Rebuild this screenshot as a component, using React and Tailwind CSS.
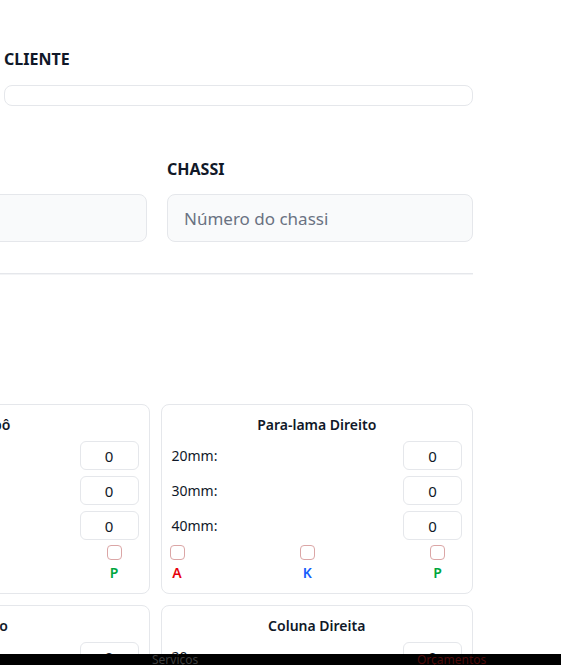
import React, { useState } from 'react';

const PARTS = [
  'Capô',
  'Para-lama Direito',
  'Teto',
  'Coluna Direita',
  'Porta Esquerda',
  'Porta Direita',
];

const SIZES = ['20mm', '30mm', '40mm'];

const TYPES = [
  { key: 'A', color: 'text-red-600' },
  { key: 'K', color: 'text-blue-600' },
  { key: 'P', color: 'text-green-600' },
];

const PartCard = ({ name }) => {
  const [values, setValues] = useState({ '20mm': 0, '30mm': 0, '40mm': 0 });
  const [checks, setChecks] = useState({ A: false, K: false, P: false });

  return (
    <div className="rounded-lg border border-gray-200 bg-white px-[10px] pt-[10px] pb-[10px]">
      <h4 className="text-center text-[14px] font-semibold leading-5 text-gray-900">{name}</h4>

      <div className="mt-[6px] flex flex-col gap-[6px]">
        {SIZES.map((size) => (
          <div key={size} className="flex items-center justify-between">
            <span className="text-[14px] text-gray-900">{size}:</span>
            <input
              type="text"
              value={values[size]}
              onChange={(e) => setValues({ ...values, [size]: e.target.value })}
              className="h-[29px] w-[59px] rounded-md border border-gray-200 bg-white text-center text-[15px] text-gray-900 outline-none"
            />
          </div>
        ))}
      </div>

      <div className="mt-[5px] -ml-[2px] flex justify-between pr-[17px]">
        {TYPES.map((t) => (
          <label key={t.key} className="flex cursor-pointer flex-col items-center">
            <input
              type="checkbox"
              checked={checks[t.key]}
              onChange={() => setChecks({ ...checks, [t.key]: !checks[t.key] })}
              className="h-[15px] w-[15px] appearance-none rounded-[4px] border border-[#dba6a6] bg-white"
            />
            <span className={`mt-[3px] text-[14px] font-semibold leading-5 ${t.color}`}>{t.key}</span>
          </label>
        ))}
      </div>
    </div>
  );
};

const App = () => {
  const [cliente, setCliente] = useState('');
  const [placa, setPlaca] = useState('');
  const [chassi, setChassi] = useState('');

  return (
    <div className="min-h-screen w-full overflow-hidden bg-white font-['Noto_Sans',sans-serif] text-gray-900">
      <div className="-ml-[163px] w-[636px] pb-24">
        <div className="ml-[167px] pt-[47px]">
          <label className="block text-[16px] font-bold leading-6">CLIENTE</label>
          <input
            value={cliente}
            onChange={(e) => setCliente(e.target.value)}
            className="mt-[14px] block h-[21px] w-full rounded-lg border border-gray-200 bg-white outline-none"
          />
        </div>

        <div className="mt-[51px] grid grid-cols-2 gap-x-5 pl-[4px]">
          <div>
            <label className="block text-[16px] font-bold leading-6">PLACA</label>
            <input
              value={placa}
              onChange={(e) => setPlaca(e.target.value)}
              placeholder="Placa"
              className="mt-[13px] block h-[48px] w-full rounded-lg border border-gray-200 bg-gray-50 px-4 text-[17px] outline-none placeholder:text-gray-500"
            />
          </div>
          <div>
            <label className="block text-[16px] font-bold leading-6">CHASSI</label>
            <input
              value={chassi}
              onChange={(e) => setChassi(e.target.value)}
              placeholder="Número do chassi"
              className="mt-[13px] block h-[48px] w-full rounded-lg border border-gray-200 bg-gray-50 px-4 text-[17px] outline-none placeholder:text-gray-500"
            />
          </div>
        </div>

        <div className="mt-[31px] border-t border-b border-t-gray-200 border-b-gray-100" />

        <div className="mt-[129px] grid grid-cols-2 gap-[11px]">
          {PARTS.map((p) => (
            <PartCard key={p} name={p} />
          ))}
        </div>
      </div>

      <nav className="fixed bottom-0 left-0 right-0 h-[11px] overflow-hidden bg-black">
        <div className="-mt-[2px] flex pl-[152px] text-[12px] leading-4">
          <span className="w-[265px] text-[#3d3d3d]">Serviços</span>
          <span className="text-[#4d0a0a]">Orçamentos</span>
        </div>
      </nav>
    </div>
  );
};

export default App;
